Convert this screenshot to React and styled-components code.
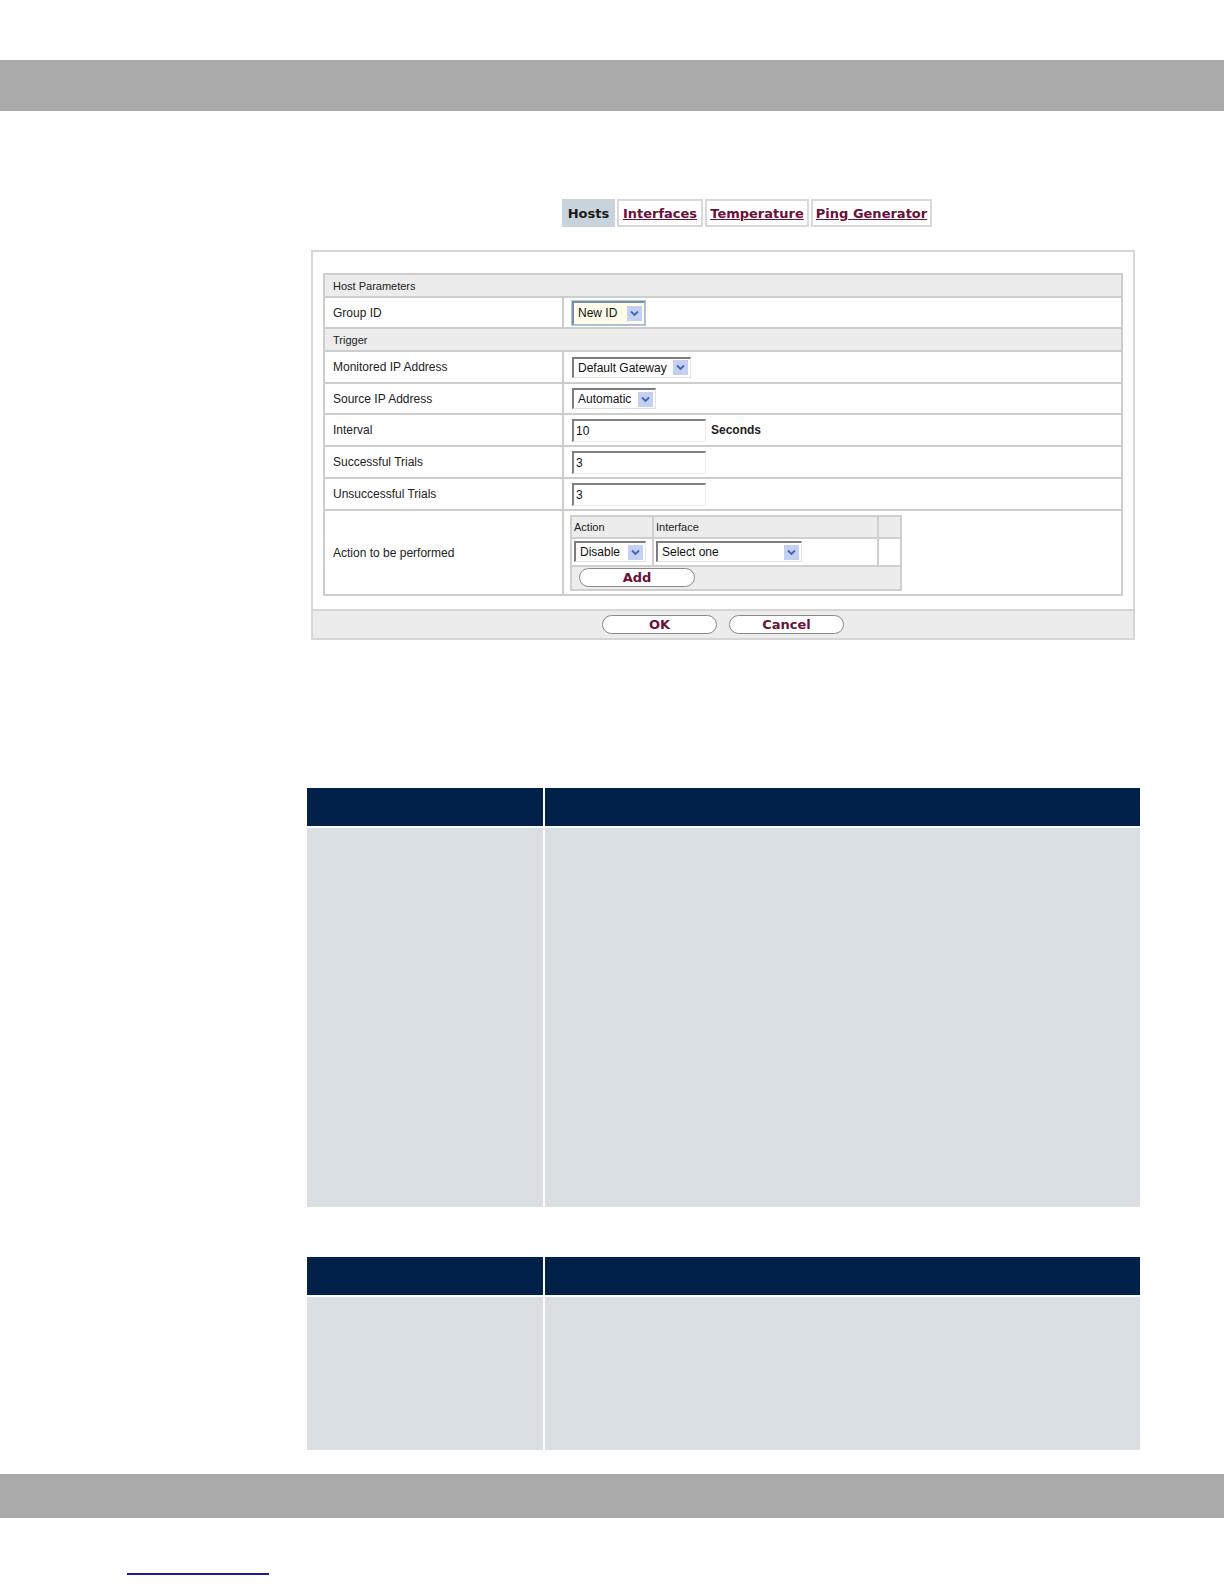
import styled, { createGlobalStyle } from "styled-components"

const GlobalStyle = createGlobalStyle`
  html, body {
    margin: 0;
    padding: 0;
    background: #fff;
  }
  body {
    font-family: "Liberation Sans", Arial, sans-serif;
    color: #222;
  }
`

const Page = styled.div`
  width: 1224px;
  padding-top: 60px;
  padding-bottom: 7px;
`

const GreyBar = styled.div`
  height: ${(p) => p.$h}px;
  margin-top: ${(p) => p.$mt || 0}px;
  background: #aaaaaa;
`

const Content = styled.div`
  padding-left: 307px;
  width: 833px;
`

const Tabs = styled.div`
  display: flex;
  gap: 2px;
  margin: 88px 0 0 255px;
  height: 28px;
`

const Tab = styled.a`
  display: flex;
  align-items: center;
  justify-content: center;
  box-sizing: border-box;
  width: ${(p) => p.$w}px;
  font-family: "DejaVu Sans", Verdana, sans-serif;
  font-size: 13px;
  font-weight: bold;
  color: ${(p) => (p.$active ? "#1a1a1a" : "#6b1038")};
  text-decoration: ${(p) => (p.$active ? "none" : "underline")};
  background: ${(p) => (p.$active ? "#c9d3db" : "#fff")};
  border: 2px solid ${(p) => (p.$active ? "#c9d3db" : "#d9d9d9")};
`

const Panel = styled.div`
  margin: 23px 0 0 4px;
  width: 824px;
  box-sizing: border-box;
  border: 2px solid #d6d6d6;
  background: #fff;
`

const PanelBody = styled.div`
  padding: 21px 10px 13px 10px;
`

const FormTable = styled.table`
  width: 800px;
  border-collapse: collapse;
  border: 2px solid #cdcdcd;
  font-size: 12px;
  td {
    border: 2px solid #cdcdcd;
    padding: 0 0 0 8px;
    vertical-align: middle;
  }
`

const SectionRow = styled.tr`
  height: 23px;
  background: #ececec;
  td {
    font-size: 11px;
  }
`

const FieldRow = styled.tr`
  height: ${(p) => p.$h || 32}px;
  background: #fff;
`

const LabelCell = styled.td`
  width: 229px;
`

const ValueCell = styled.td`
  && {
    padding-left: ${(p) => (p.$flush ? 0 : 8)}px;
  }
`

const SelectBox = styled.div`
  display: inline-flex;
  align-items: center;
  box-sizing: border-box;
  width: ${(p) => p.$w}px;
  height: ${(p) => (p.$focus ? 24 : 21)}px;
  padding: 0 2px 0 4px;
  font-size: 12px;
  color: #111;
  background: ${(p) => (p.$focus ? "#fffce9" : "#fff")};
  border-style: solid;
  border-width: 2px 1px 1px 2px;
  border-color: ${(p) =>
    p.$focus ? "#7c8fa8 #a9bbd3 #a9bbd3 #7c8fa8" : "#7d7d7d #e2e2e2 #e2e2e2 #7d7d7d"};
  box-shadow: ${(p) => (p.$focus ? "0 0 0 1px #b3c4dc" : "none")};
  span {
    white-space: nowrap;
  }
`

const Arrow = styled.span`
  display: flex;
  align-items: center;
  justify-content: center;
  width: 15px;
  height: 15px;
  margin-left: auto;
  background: #c3d0f2;
`

function Select({ children, width, focus }) {
  return (
    <SelectBox $w={width} $focus={focus}>
      <span>{children}</span>
      <Arrow>
        <svg width="9" height="7" viewBox="0 0 9 7">
          <path d="M1 1.5 L4.5 5 L8 1.5" fill="none" stroke="#4664b4" strokeWidth="1.8" />
        </svg>
      </Arrow>
    </SelectBox>
  )
}

const TextInput = styled.div`
  display: inline-flex;
  align-items: center;
  box-sizing: border-box;
  width: 134px;
  height: 23px;
  padding-left: 2px;
  font-size: 12px;
  color: #111;
  border-style: solid;
  border-width: 2px 1px 1px 2px;
  border-color: #808080 #ececec #ececec #808080;
  vertical-align: middle;
`

const Unit = styled.span`
  margin-left: 5px;
  font-weight: bold;
  font-size: 12px;
  vertical-align: middle;
`

const ActionTable = styled.table`
  width: 332px;
  margin: 3px 0 3px 6px;
  border-collapse: collapse;
  border: 2px solid #cfcfcf;
  font-size: 11px;
  && td {
    border: 2px solid #cfcfcf;
    padding: 0 2px;
  }
`

const ActionHead = styled.tr`
  height: 22px;
  background: #ececec;
`

const ActionRow = styled.tr`
  height: 28px;
  background: #fff;
`

const ActionFoot = styled.tr`
  height: 24px;
  background: #ececec;
  && td {
    padding-left: 7px;
  }
`

const PillButton = styled.button`
  display: inline-flex;
  align-items: center;
  justify-content: center;
  width: ${(p) => p.$w || 115}px;
  height: 19px;
  padding: 0;
  background: #fff;
  border: 1px solid #8a8a8a;
  border-radius: 10px;
  font-family: "DejaVu Sans", Verdana, sans-serif;
  font-size: 13px;
  font-weight: bold;
  color: #6b1038;
  vertical-align: middle;
`

const ButtonBar = styled.div`
  display: flex;
  justify-content: center;
  gap: 12px;
  height: 27px;
  align-items: center;
  background: #ececec;
  border-top: 2px solid #d6d6d6;
`

const DocTable = styled.div`
  display: grid;
  grid-template-columns: 236px 1fr;
  grid-template-rows: 38px ${(p) => p.$body}px;
  gap: 2px;
  margin-top: ${(p) => p.$mt}px;
  background: #fff;
`

const DocHead = styled.div`
  background: #012148;
`

const DocCell = styled.div`
  background: #d9dfe3;
`

const FootLine = styled.div`
  width: 142px;
  height: 2px;
  margin: 55px 0 0 127px;
  background: #1b1ba0;
`

export default function App() {
  const fields = [
    ["Successful Trials", "3"],
    ["Unsuccessful Trials", "3"],
  ]
  return (
    <Page>
      <GlobalStyle />
      <GreyBar $h={51} />
      <Content>
        <Tabs>
          <Tab $active $w={53}>Hosts</Tab>
          <Tab href="#" $w={86}>Interfaces</Tab>
          <Tab href="#" $w={104}>Temperature</Tab>
          <Tab href="#" $w={121}>Ping Generator</Tab>
        </Tabs>

        <Panel>
          <PanelBody>
            <FormTable>
              <tbody>
                <SectionRow><td colSpan={2}>Host Parameters</td></SectionRow>
                <FieldRow $h={31}>
                  <LabelCell>Group ID</LabelCell>
                  <ValueCell><Select width={73} focus>New ID</Select></ValueCell>
                </FieldRow>
                <SectionRow><td colSpan={2}>Trigger</td></SectionRow>
                <FieldRow>
                  <LabelCell>Monitored IP Address</LabelCell>
                  <ValueCell><Select width={119}>Default Gateway</Select></ValueCell>
                </FieldRow>
                <FieldRow $h={31}>
                  <LabelCell>Source IP Address</LabelCell>
                  <ValueCell><Select width={84}>Automatic</Select></ValueCell>
                </FieldRow>
                <FieldRow>
                  <LabelCell>Interval</LabelCell>
                  <ValueCell>
                    <TextInput>10</TextInput>
                    <Unit>Seconds</Unit>
                  </ValueCell>
                </FieldRow>
                {fields.map(([label, value]) => (
                  <FieldRow key={label}>
                    <LabelCell>{label}</LabelCell>
                    <ValueCell><TextInput>{value}</TextInput></ValueCell>
                  </FieldRow>
                ))}
                <FieldRow $h={85}>
                  <LabelCell>Action to be performed</LabelCell>
                  <ValueCell $flush>
                    <ActionTable>
                      <tbody>
                        <ActionHead>
                          <td style={{ width: 76 }}>Action</td>
                          <td style={{ width: 219 }}>Interface</td>
                          <td></td>
                        </ActionHead>
                        <ActionRow>
                          <td><Select width={72}>Disable</Select></td>
                          <td><Select width={146}>Select one</Select></td>
                          <td></td>
                        </ActionRow>
                        <ActionFoot>
                          <td colSpan={3}><PillButton $w={116}>Add</PillButton></td>
                        </ActionFoot>
                      </tbody>
                    </ActionTable>
                  </ValueCell>
                </FieldRow>
              </tbody>
            </FormTable>
          </PanelBody>
          <ButtonBar>
            <PillButton>OK</PillButton>
            <PillButton>Cancel</PillButton>
          </ButtonBar>
        </Panel>

        <DocTable $mt={148} $body={379}>
          <DocHead />
          <DocHead />
          <DocCell />
          <DocCell />
        </DocTable>

        <DocTable $mt={50} $body={153}>
          <DocHead />
          <DocHead />
          <DocCell />
          <DocCell />
        </DocTable>
      </Content>
      <GreyBar $h={44} $mt={24} />
      <FootLine />
    </Page>
  )
}
